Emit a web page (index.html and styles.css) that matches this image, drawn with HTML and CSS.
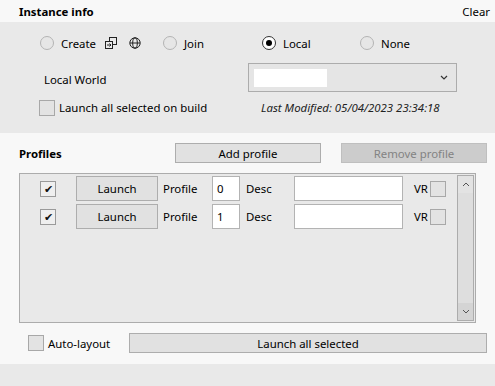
FILE: index.html
```html
<!DOCTYPE html>
<html lang="en">
  <head>
    <meta charset="UTF-8" />
    <meta name="viewport" content="width=device-width, initial-scale=1.0" />
    <title>Instance info</title>
    <link rel="stylesheet" href="styles.css">
  </head>
  <body>
    <div class="header">
      <span class="title">Instance info</span>
      <span class="clear">Clear</span>
    </div>
    <div class="instance">
      <div class="radio-row">
        <label class="radio-item">
          <span class="radio"></span>
          <span>Create</span>
          <svg class="icon" width="12" height="12" viewBox="0 0 12 12">
            <rect x="4.5" y="0.5" width="7" height="7" fill="none" stroke="#222" />
            <rect x="0.5" y="4.5" width="7" height="7" fill="#e9e9e9" stroke="#222" />
            <path d="M2 8 H6 M4.5 6.5 L6 8 L4.5 9.5" fill="none" stroke="#222" />
          </svg>
          <svg class="icon globe" width="12" height="12" viewBox="0 0 12 12">
            <circle cx="6" cy="6" r="5.2" fill="none" stroke="#222" />
            <ellipse cx="6" cy="6" rx="2.3" ry="5.2" fill="none" stroke="#222" />
            <path d="M1 6 H11" stroke="#222" />
          </svg>
        </label>
        <label class="radio-item">
          <span class="radio"></span>
          <span>Join</span>
        </label>
        <label class="radio-item">
          <span class="radio checked"></span>
          <span>Local</span>
        </label>
        <label class="radio-item">
          <span class="radio"></span>
          <span>None</span>
        </label>
      </div>
      <div class="world-row">
        <span class="world-label">Local World</span>
        <div class="select">
          <span class="select-value"></span>
          <svg width="8" height="5" viewBox="0 0 8 5">
            <path d="M1 1 L4 4 L7 1" fill="none" stroke="#333" stroke-width="1.2" />
          </svg>
        </div>
      </div>
      <div class="build-row">
        <label class="check-item">
          <span class="checkbox"></span>
          <span>Launch all selected on build</span>
        </label>
        <span class="modified">Last Modified: 05/04/2023 23:34:18</span>
      </div>
    </div>
    <div class="profiles">
      <div class="toolbar">
        <span class="title">Profiles</span>
        <button class="btn">Add profile</button>
        <button class="btn" disabled>Remove profile</button>
      </div>
      <div class="list">
        <div class="rows">
          <div class="profile-row">
            <span class="cell-check"><span class="checkbox ticked">&#10004;</span></span>
            <button class="btn launch">Launch</button>
            <span class="cell-label">Profile</span>
            <span class="input num">0</span>
            <span class="cell-label desc">Desc</span>
            <span class="input text"></span>
            <span class="vr">VR <span class="checkbox"></span></span>
          </div>
          <div class="profile-row">
            <span class="cell-check"><span class="checkbox ticked">&#10004;</span></span>
            <button class="btn launch">Launch</button>
            <span class="cell-label">Profile</span>
            <span class="input num">1</span>
            <span class="cell-label desc">Desc</span>
            <span class="input text"></span>
            <span class="vr">VR <span class="checkbox"></span></span>
          </div>
        </div>
        <div class="scrollbar">
          <span class="arrow up">
            <svg width="8" height="5" viewBox="0 0 8 5"><path d="M1 4 L4 1 L7 4" fill="none" stroke="#555" /></svg>
          </span>
          <span class="track"></span>
          <span class="arrow down">
            <svg width="8" height="5" viewBox="0 0 8 5"><path d="M1 1 L4 4 L7 1" fill="none" stroke="#555" /></svg>
          </span>
        </div>
      </div>
      <div class="bottom-row">
        <label class="check-item">
          <span class="checkbox"></span>
          <span>Auto-layout</span>
        </label>
        <button class="btn launch-all">Launch all selected</button>
      </div>
    </div>
    <div class="footer"></div>
  </body>
</html>
```

FILE: styles.css
```css
body {
  font-family: "Noto Sans", "Open Sans", sans-serif;
  font-size: 11.4px;
  margin: 0;
  padding: 0;
  background-color: #f8f8f8;
  color: #000000;
}
.title {
  font-weight: bold;
}
.header {
  height: 22px;
  display: flex;
  align-items: center;
  justify-content: space-between;
  padding: 0 5px 0 19px;
}
.instance {
  background-color: #e9e9e9;
  height: 111px;
  box-sizing: border-box;
  padding-top: 12px;
}
.radio-row {
  display: grid;
  grid-template-columns: 123px 99px 98px 1fr;
  padding-left: 40px;
  height: 18px;
  align-items: center;
}
.radio-item {
  display: flex;
  align-items: center;
  gap: 7px;
}
.radio {
  width: 12px;
  height: 12px;
  border: 1px solid #b4b4b4;
  border-radius: 50%;
  background-color: #e6e6e6;
  box-sizing: content-box;
  position: relative;
}
.radio.checked {
  border-color: #333333;
  background-color: #ffffff;
}
.radio.checked::after {
  content: "";
  position: absolute;
  left: 3px;
  top: 3px;
  width: 6px;
  height: 6px;
  border-radius: 50%;
  background-color: #000000;
}
.icon {
  margin-left: 2px;
}
.globe {
  margin-left: 5px;
}
.world-row {
  display: grid;
  grid-template-columns: 204px 209px;
  padding-left: 44px;
  margin-top: 11px;
  align-items: center;
}
.world-label {
  padding-top: 3px;
}
.select {
  height: 29px;
  box-sizing: border-box;
  border: 1px solid #acacac;
  background-color: #e5e5e5;
  display: flex;
  align-items: center;
  justify-content: space-between;
  padding: 0 8px 0 5px;
}
.select-value {
  width: 73px;
  height: 18px;
  background-color: #ffffff;
}
.build-row {
  display: grid;
  grid-template-columns: 222px 1fr;
  padding-left: 39px;
  margin-top: 6px;
  height: 19px;
  align-items: center;
}
.check-item {
  display: flex;
  align-items: center;
  gap: 4px;
}
.checkbox {
  width: 14px;
  height: 14px;
  border: 1px solid #a8a8a8;
  background-color: #e3e3e3;
  display: inline-flex;
  align-items: center;
  justify-content: center;
  font-size: 11px;
  color: #111111;
}
.checkbox.ticked {
  background-color: #efefef;
  border-color: #9a9a9a;
}
.modified {
  font-style: italic;
  color: #222222;
}
.profiles {
  padding: 10px 0 11px 0;
}
.toolbar {
  display: flex;
  align-items: center;
  padding-left: 19px;
  height: 20px;
}
.toolbar .title {
  width: 156px;
  flex-shrink: 0;
}
.btn {
  font-family: inherit;
  font-size: 11.4px;
  height: 20px;
  border: 1px solid #adadad;
  background-color: #e1e1e1;
  color: #000000;
  padding: 0;
}
.toolbar .btn {
  width: 146px;
  flex-shrink: 0;
}
.toolbar .btn + .btn {
  margin-left: 20px;
}
.btn:disabled {
  background-color: #cccccc;
  border-color: #bfbfbf;
  color: #838383;
}
.list {
  margin: 10px 0 0 19px;
  width: 457px;
  height: 150px;
  box-sizing: border-box;
  border: 1px solid #acacac;
  background-color: #e9e9e9;
  display: flex;
}
.rows {
  flex: 1;
  padding-top: 2px;
  display: flex;
  flex-direction: column;
  gap: 3px;
}
.profile-row {
  display: grid;
  grid-template-columns: 56px 82px 54px 28px 54px 109px 1fr;
  height: 25px;
  align-items: center;
}
.cell-check {
  padding-left: 20px;
}
.btn.launch {
  height: 25px;
}
.cell-label {
  padding-left: 5px;
}
.cell-label.desc {
  padding-left: 6px;
}
.input {
  height: 25px;
  box-sizing: border-box;
  border: 1px solid #b3b3b3;
  background-color: #ffffff;
  display: flex;
  align-items: center;
  padding-left: 4px;
}
.vr {
  padding-left: 11px;
  display: flex;
  align-items: center;
  gap: 2px;
}
.scrollbar {
  width: 17px;
  margin: 1px 1px 1px 0;
  box-sizing: border-box;
  border: 1px solid #acacac;
  background-color: #e3e3e3;
  display: flex;
  flex-direction: column;
}
.arrow {
  height: 17px;
  display: flex;
  align-items: center;
  justify-content: center;
  background-color: #e3e3e3;
}
.arrow.down {
  background-color: #d4d4d4;
}
.track {
  flex: 1;
  background-color: #dedede;
}
.bottom-row {
  display: flex;
  align-items: center;
  margin-top: 10px;
  padding-left: 28px;
  height: 20px;
}
.bottom-row .check-item {
  width: 101px;
}
.btn.launch-all {
  width: 358px;
}
.footer {
  background-color: #e9e9e9;
  height: 22px;
}
```
